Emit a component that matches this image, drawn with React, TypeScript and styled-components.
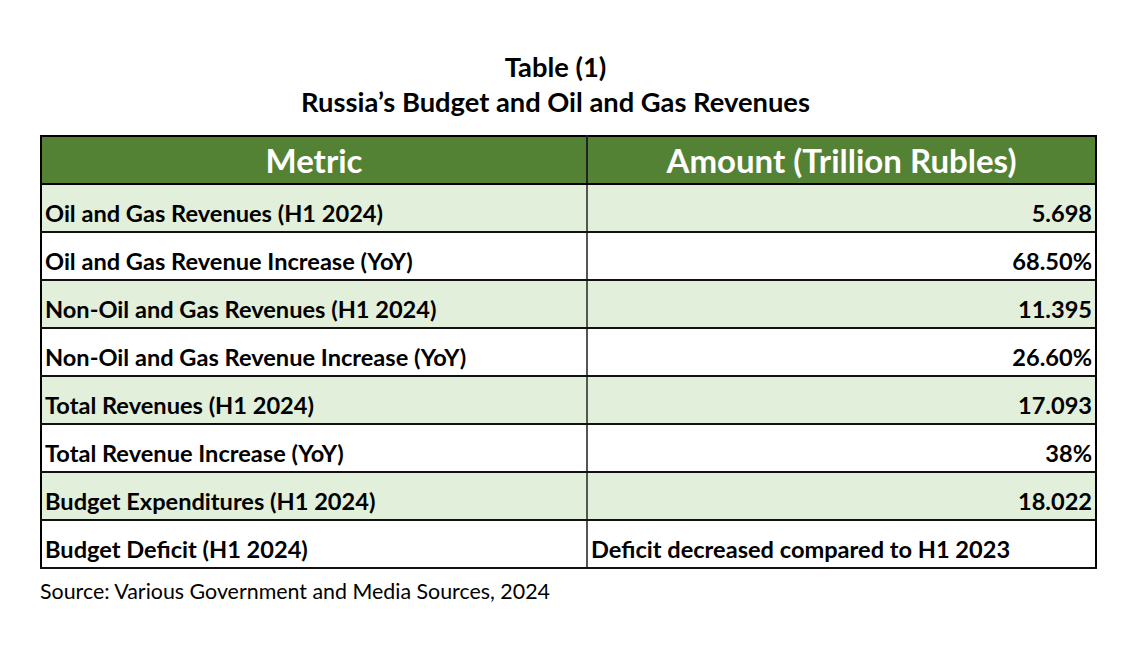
import React from "react";
import styled, { createGlobalStyle } from "styled-components";

const Global = createGlobalStyle`
  html, body { margin: 0; padding: 0; background: #ffffff; }
  body { font-family: "Lato", "Open Sans", sans-serif; color: #000; }
`;

const Page = styled.div`
  width: 1140px;
  height: 654px;
  padding: 49px 0 0 40px;
  box-sizing: border-box;
  display: flex;
  flex-direction: column;
`;

const Title = styled.div`
  width: 1057px;
  box-sizing: border-box;
  padding-right: 26px;
  text-align: center;
  font-weight: 700;
  font-size: 27.3px;
  line-height: 35px;
  margin-bottom: 16px;
`;

const Table = styled.table`
  width: 1057px;
  border-collapse: collapse;
  border: 2px solid #000;
  table-layout: fixed;
`;

const HeadCell = styled.th`
  background: #548235;
  color: #fff;
  font-weight: 700;
  font-size: 33px;
  height: 46px;
  padding: 0;
  text-align: center;
  border-left: 2px solid #222;
  border-bottom: 2px solid #000;
  &:first-child { border-left: none; }
`;

const Row = styled.tr<{ $shade: boolean }>`
  background: ${(p) => (p.$shade ? "#e2efda" : "#ffffff")};
`;

const Cell = styled.td<{ $align: "left" | "right" }>`
  height: 42px;
  padding: 0 3px 4px 3px;
  vertical-align: bottom;
  font-weight: 700;
  font-size: 23.6px;
  line-height: 28px;
  text-align: ${(p) => p.$align};
  border-bottom: 2px solid #111;
  border-left: 2px solid #555;
  &:first-child { border-left: none; }
  white-space: nowrap;
`;

const Source = styled.div`
  margin-top: 9px;
  font-size: 21.4px;
  font-weight: 400;
`;

const rows: [string, string][] = [
  ["Oil and Gas Revenues (H1 2024)", "5.698"],
  ["Oil and Gas Revenue Increase (YoY)", "68.50%"],
  ["Non-Oil and Gas Revenues (H1 2024)", "11.395"],
  ["Non-Oil and Gas Revenue Increase (YoY)", "26.60%"],
  ["Total Revenues (H1 2024)", "17.093"],
  ["Total Revenue Increase (YoY)", "38%"],
  ["Budget Expenditures (H1 2024)", "18.022"],
  ["Budget Deficit (H1 2024)", "Deficit decreased compared to H1 2023"],
];

export default function App() {
  return (
    <>
      <Global />
      <Page>
        <Title>
          Table (1)
          <br />
          Russia’s Budget and Oil and Gas Revenues
        </Title>
        <Table>
          <colgroup>
            <col style={{ width: 546 }} />
            <col />
          </colgroup>
          <thead>
            <tr>
              <HeadCell>Metric</HeadCell>
              <HeadCell>Amount (Trillion Rubles)</HeadCell>
            </tr>
          </thead>
          <tbody>
            {rows.map(([m, v], i) => (
              <Row key={m} $shade={i % 2 === 0}>
                <Cell $align="left">{m}</Cell>
                <Cell $align={i === rows.length - 1 ? "left" : "right"}>{v}</Cell>
              </Row>
            ))}
          </tbody>
        </Table>
        <Source>Source: Various Government and Media Sources, 2024</Source>
      </Page>
    </>
  );
}
